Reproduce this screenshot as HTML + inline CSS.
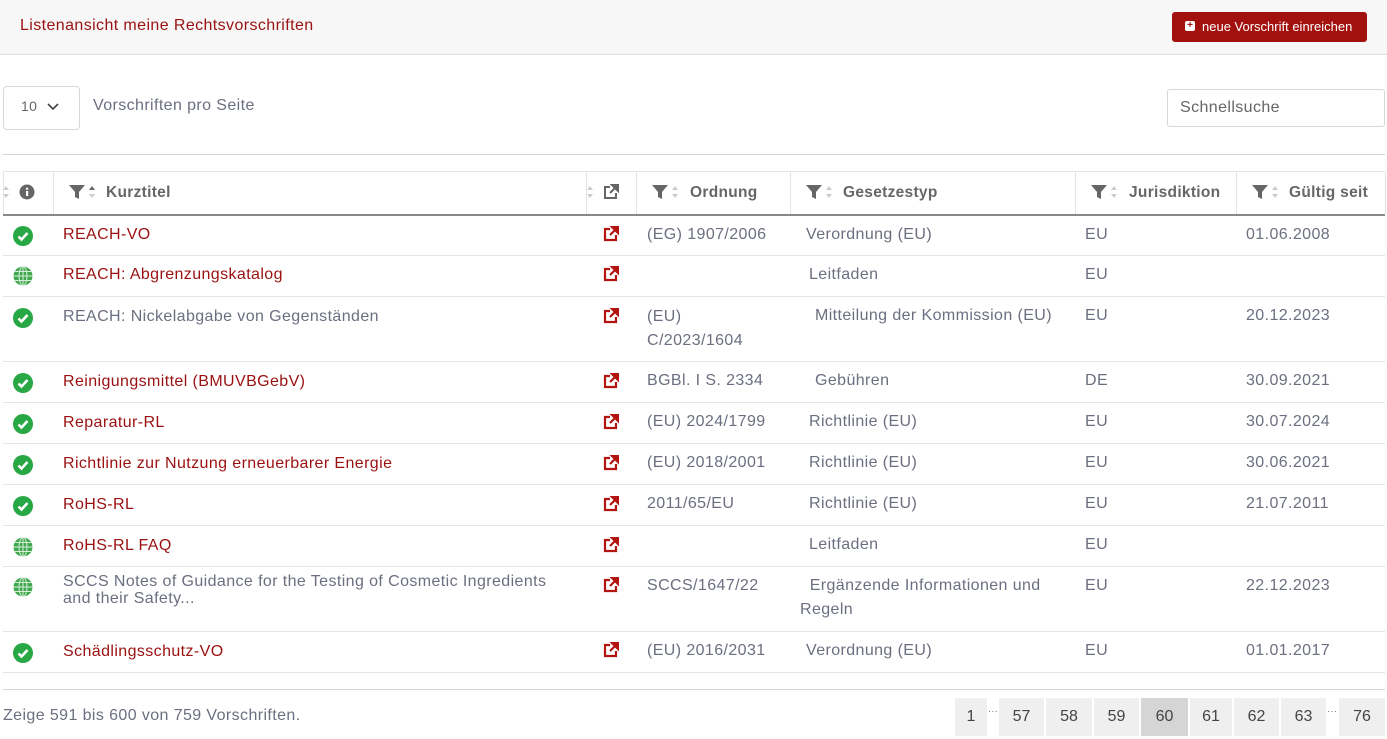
<!DOCTYPE html>
<html><head><meta charset="utf-8"><style>
*{margin:0;padding:0;box-sizing:border-box}
body{width:1387px;height:739px;background:#fff;font-family:"Liberation Sans",sans-serif;font-size:16px;letter-spacing:.4px;color:#6b6f80;position:relative;overflow:hidden}
.a{position:absolute;white-space:nowrap}
.hl{position:absolute;height:1px;background:#e3e5e8;left:3px;width:1382px}
.red{color:#9b1010}
.h{font-weight:bold;color:#666;font-size:15.5px;letter-spacing:.3px}
.pg{position:absolute;top:698px;height:38px;background:#efefef;color:#444;text-align:center;line-height:38px;font-size:16px;letter-spacing:0}
.dots{position:absolute;top:706px;font-size:9px;color:#666}
</style></head><body>
<div class="a" style="left:0;top:0;width:1387px;height:55px;background:#f7f7f7;border-bottom:1px solid #ddd"></div>
<div class="a red" style="left:20px;top:17px;font-size:16px">Listenansicht meine Rechtsvorschriften</div>
<div class="a" style="left:1172px;top:12px;width:195px;height:30px;background:#a3110f;border-radius:3px;color:#fff;font-size:13px;letter-spacing:0;line-height:30px;padding-left:30px">neue Vorschrift einreichen</div>
<div class="a" style="left:1185px;top:21px;width:10px;height:10px;background:#fff;border-radius:2px;color:#a3110f;font-size:10px;line-height:10px;text-align:center;font-weight:bold;letter-spacing:0">+</div>

<div class="a" style="left:3px;top:86px;width:77px;height:44px;border:1px solid #d8d8d8;border-radius:4px"></div>
<div class="a" style="left:21px;top:98px;color:#666;font-size:14px">10</div>
<svg class="a" style="left:47px;top:103px" width="12" height="8"><path d="M1 1l5 5 5-5" stroke="#444" stroke-width="1.6" fill="none"/></svg>
<div class="a" style="left:93px;top:97px">Vorschriften pro Seite</div>
<div class="a" style="left:1167px;top:89px;width:218px;height:38px;border:1px solid #d8d8d8;border-radius:3px;padding-left:12px;line-height:36px;color:#666">Schnellsuche</div>

<div class="hl" style="top:154px;background:#d5d5d5"></div>
<div class="hl" style="top:171px"></div>
<div class="hl" style="top:214px;height:2px;background:#888"></div>
<div class="a" style="left:53px;top:172px;width:1px;height:42px;background:#e3e5e8"></div>
<div class="a" style="left:586px;top:172px;width:1px;height:42px;background:#e3e5e8"></div>
<div class="a" style="left:636px;top:172px;width:1px;height:42px;background:#e3e5e8"></div>
<div class="a" style="left:790px;top:172px;width:1px;height:42px;background:#e3e5e8"></div>
<div class="a" style="left:1075px;top:172px;width:1px;height:42px;background:#e3e5e8"></div>
<div class="a" style="left:1236px;top:172px;width:1px;height:42px;background:#e3e5e8"></div>
<div class="a" style="left:3px;top:172px;width:1px;height:42px;background:#e3e5e8"></div>
<div class="a" style="left:1385px;top:172px;width:1px;height:42px;background:#e3e5e8"></div>

<svg class="a" style="left:3px;top:183px" width="8" height="18"><path d="M0 7l3-4 3 4zM0 11l3 4 3-4z" fill="#ccc"/></svg>
<svg class="a" style="left:19px;top:184px" width="16" height="16"><circle cx="8" cy="8" r="7.5" fill="#666"/><rect x="7" y="7" width="2.2" height="5" fill="#fff"/><circle cx="8.1" cy="4.8" r="1.2" fill="#fff"/></svg>
<svg class="a" style="left:69px;top:184px" width="18" height="16"><path d="M0 1h16l-6 7v7l-4-2v-5z" fill="#666"/></svg>
<svg class="a" style="left:89px;top:183px" width="8" height="18"><path d="M0 7l3-4 3 4z" fill="#666"/><path d="M0 11l3 4 3-4z" fill="#ccc"/></svg>
<div class="a h" style="left:106px;top:184px">Kurztitel</div>
<svg class="a" style="left:587px;top:183px" width="8" height="18"><path d="M0 7l3-4 3 4zM0 11l3 4 3-4z" fill="#ccc"/></svg>
<svg class="a" style="left:603px;top:184px" width="16" height="16"><path d="M7 3H2v11h11V9" stroke="#666" stroke-width="2" fill="none"/><path d="M9 1h6v6z M14 2l-7 7" stroke="#666" stroke-width="2" fill="#666"/></svg>
<svg class="a" style="left:652px;top:184px" width="18" height="16"><path d="M0 1h16l-6 7v7l-4-2v-5z" fill="#666"/></svg>
<svg class="a" style="left:672px;top:183px" width="8" height="18"><path d="M0 7l3-4 3 4zM0 11l3 4 3-4z" fill="#ccc"/></svg>
<div class="a h" style="left:690px;top:184px">Ordnung</div>
<svg class="a" style="left:806px;top:184px" width="18" height="16"><path d="M0 1h16l-6 7v7l-4-2v-5z" fill="#666"/></svg>
<svg class="a" style="left:826px;top:183px" width="8" height="18"><path d="M0 7l3-4 3 4zM0 11l3 4 3-4z" fill="#ccc"/></svg>
<div class="a h" style="left:843px;top:184px">Gesetzestyp</div>
<svg class="a" style="left:1091px;top:184px" width="18" height="16"><path d="M0 1h16l-6 7v7l-4-2v-5z" fill="#666"/></svg>
<svg class="a" style="left:1111px;top:183px" width="8" height="18"><path d="M0 7l3-4 3 4zM0 11l3 4 3-4z" fill="#ccc"/></svg>
<div class="a h" style="left:1129px;top:184px">Jurisdiktion</div>
<svg class="a" style="left:1252px;top:184px" width="18" height="16"><path d="M0 1h16l-6 7v7l-4-2v-5z" fill="#666"/></svg>
<svg class="a" style="left:1272px;top:183px" width="8" height="18"><path d="M0 7l3-4 3 4zM0 11l3 4 3-4z" fill="#ccc"/></svg>
<div class="a h" style="left:1289px;top:184px">Gültig seit</div>

<div class="hl" style="top:255px"></div><div class="hl" style="top:296px"></div><div class="hl" style="top:361px"></div><div class="hl" style="top:402px"></div><div class="hl" style="top:443px"></div><div class="hl" style="top:484px"></div><div class="hl" style="top:525px"></div><div class="hl" style="top:566px"></div><div class="hl" style="top:631px"></div><div class="hl" style="top:672px"></div>
<div class="hl" style="top:689px;background:#d5d5d5"></div>

<svg width="0" height="0" style="position:absolute"><defs>
<g id="ck"><circle cx="10" cy="10" r="10" fill="#28a745"/><path d="M5.5 10.5l3 3 6-6.5" stroke="#fff" stroke-width="2.6" fill="none"/></g>
<g id="gl"><circle cx="10" cy="10" r="9.5" fill="#3fa84f"/><g stroke="#d8f0d8" stroke-width="1" fill="none"><ellipse cx="10" cy="10" rx="4" ry="9.5"/><path d="M10 .5v19M.5 10h19M2 5.5h16M2 14.5h16"/></g></g>
<g id="ex"><path d="M7 3H2v11h11V9" stroke="#b3140f" stroke-width="2.2" fill="none"/><path d="M9 1h6v6z M14 2l-7 7" stroke="#b3140f" stroke-width="2.2" fill="#b3140f"/></g>
</defs></svg>

<svg class="a" style="left:13px;top:226px" width="20" height="20"><use href="#ck"/></svg>
<div class="a red" style="left:63px;top:226px">REACH-VO</div>
<svg class="a" style="left:603px;top:226px" width="16" height="16"><use href="#ex"/></svg>
<div class="a" style="left:647px;top:226px">(EG) 1907/2006</div>
<div class="a" style="left:806px;top:226px">Verordnung (EU)</div>
<div class="a" style="left:1085px;top:226px">EU</div>
<div class="a" style="left:1246px;top:226px">01.06.2008</div>

<svg class="a" style="left:13px;top:266px" width="20" height="20"><use href="#gl"/></svg>
<div class="a red" style="left:63px;top:266px">REACH: Abgrenzungskatalog</div>
<svg class="a" style="left:603px;top:266px" width="16" height="16"><use href="#ex"/></svg>
<div class="a" style="left:809px;top:266px">Leitfaden</div>
<div class="a" style="left:1085px;top:266px">EU</div>

<svg class="a" style="left:13px;top:308px" width="20" height="20"><use href="#ck"/></svg>
<div class="a" style="left:63px;top:308px">REACH: Nickelabgabe von Gegenständen</div>
<svg class="a" style="left:603px;top:308px" width="16" height="16"><use href="#ex"/></svg>
<div class="a" style="left:647px;top:305px;line-height:24px">(EU)<br>C/2023/1604</div>
<div class="a" style="left:815px;top:307px">Mitteilung der Kommission (EU)</div>
<div class="a" style="left:1085px;top:307px">EU</div>
<div class="a" style="left:1246px;top:307px">20.12.2023</div>

<svg class="a" style="left:13px;top:373px" width="20" height="20"><use href="#ck"/></svg>
<div class="a red" style="left:63px;top:373px">Reinigungsmittel (BMUVBGebV)</div>
<svg class="a" style="left:603px;top:373px" width="16" height="16"><use href="#ex"/></svg>
<div class="a" style="left:647px;top:372px">BGBl. I S. 2334</div>
<div class="a" style="left:815px;top:372px">Gebühren</div>
<div class="a" style="left:1085px;top:372px">DE</div>
<div class="a" style="left:1246px;top:372px">30.09.2021</div>

<svg class="a" style="left:13px;top:414px" width="20" height="20"><use href="#ck"/></svg>
<div class="a red" style="left:63px;top:414px">Reparatur-RL</div>
<svg class="a" style="left:603px;top:414px" width="16" height="16"><use href="#ex"/></svg>
<div class="a" style="left:647px;top:413px">(EU) 2024/1799</div>
<div class="a" style="left:809px;top:413px">Richtlinie (EU)</div>
<div class="a" style="left:1085px;top:413px">EU</div>
<div class="a" style="left:1246px;top:413px">30.07.2024</div>

<svg class="a" style="left:13px;top:455px" width="20" height="20"><use href="#ck"/></svg>
<div class="a red" style="left:63px;top:455px">Richtlinie zur Nutzung erneuerbarer Energie</div>
<svg class="a" style="left:603px;top:455px" width="16" height="16"><use href="#ex"/></svg>
<div class="a" style="left:647px;top:454px">(EU) 2018/2001</div>
<div class="a" style="left:809px;top:454px">Richtlinie (EU)</div>
<div class="a" style="left:1085px;top:454px">EU</div>
<div class="a" style="left:1246px;top:454px">30.06.2021</div>

<svg class="a" style="left:13px;top:496px" width="20" height="20"><use href="#ck"/></svg>
<div class="a red" style="left:63px;top:496px">RoHS-RL</div>
<svg class="a" style="left:603px;top:496px" width="16" height="16"><use href="#ex"/></svg>
<div class="a" style="left:647px;top:495px">2011/65/EU</div>
<div class="a" style="left:809px;top:495px">Richtlinie (EU)</div>
<div class="a" style="left:1085px;top:495px">EU</div>
<div class="a" style="left:1246px;top:495px">21.07.2011</div>

<svg class="a" style="left:13px;top:537px" width="20" height="20"><use href="#gl"/></svg>
<div class="a red" style="left:63px;top:537px">RoHS-RL FAQ</div>
<svg class="a" style="left:603px;top:537px" width="16" height="16"><use href="#ex"/></svg>
<div class="a" style="left:809px;top:536px">Leitfaden</div>
<div class="a" style="left:1085px;top:536px">EU</div>

<svg class="a" style="left:13px;top:577px" width="20" height="20"><use href="#gl"/></svg>
<div class="a" style="left:63px;top:573px;line-height:17px">SCCS Notes of Guidance for the Testing of Cosmetic Ingredients<br>and their Safety...</div>
<svg class="a" style="left:603px;top:577px" width="16" height="16"><use href="#ex"/></svg>
<div class="a" style="left:647px;top:577px">SCCS/1647/22</div>
<div class="a" style="left:800px;top:574px;line-height:24px">&nbsp;&nbsp;Ergänzende Informationen und<br>Regeln</div>
<div class="a" style="left:1085px;top:577px">EU</div>
<div class="a" style="left:1246px;top:577px">22.12.2023</div>

<svg class="a" style="left:13px;top:643px" width="20" height="20"><use href="#ck"/></svg>
<div class="a red" style="left:63px;top:643px">Schädlingsschutz-VO</div>
<svg class="a" style="left:603px;top:642px" width="16" height="16"><use href="#ex"/></svg>
<div class="a" style="left:647px;top:642px">(EU) 2016/2031</div>
<div class="a" style="left:806px;top:642px">Verordnung (EU)</div>
<div class="a" style="left:1085px;top:642px">EU</div>
<div class="a" style="left:1246px;top:642px">01.01.2017</div>

<div class="a" style="left:3px;top:707px">Zeige 591 bis 600 von 759 Vorschriften.</div>
<div class="pg" style="left:955px;width:32px">1</div>
<div class="dots" style="left:988px">···</div>
<div class="pg" style="left:999px;width:45px">57</div>
<div class="pg" style="left:1046px;width:46px">58</div>
<div class="pg" style="left:1094px;width:45px">59</div>
<div class="pg" style="left:1141px;width:47px;background:#d5d5d5">60</div>
<div class="pg" style="left:1190px;width:42px">61</div>
<div class="pg" style="left:1234px;width:45px">62</div>
<div class="pg" style="left:1281px;width:45px">63</div>
<div class="dots" style="left:1327px">···</div>
<div class="pg" style="left:1339px;width:46px">76</div>
</body></html>
